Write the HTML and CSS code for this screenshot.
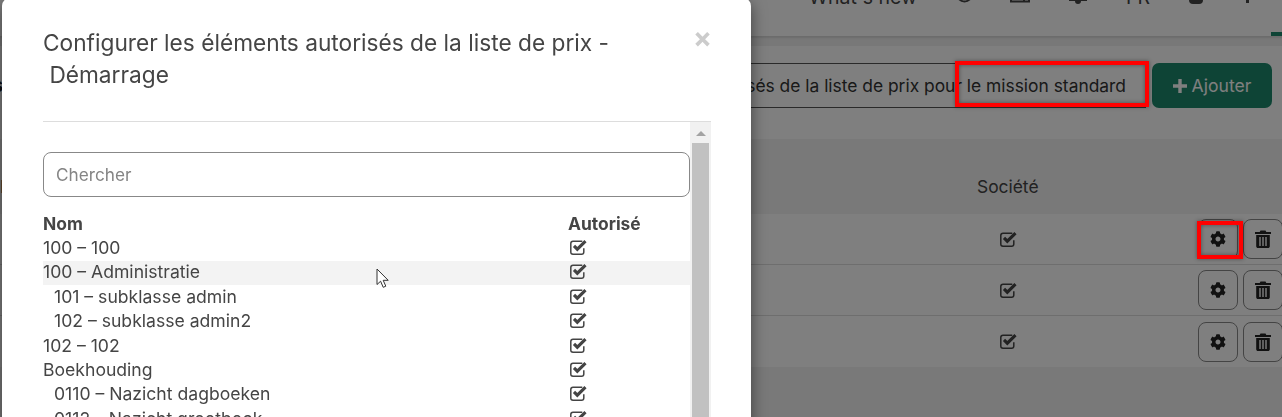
FILE: index.html
```html
<!DOCTYPE html>
<html lang="fr">
<head>
<meta charset="utf-8">
<title>Configurer les éléments autorisés</title>
<link rel="stylesheet" href="styles.css">
</head>
<body>
<svg class="defs" width="0" height="0" aria-hidden="true">
  <symbol id="i-gear" viewBox="0 0 512 512"><path d="M487.4 315.7l-42.6-24.6c4.3-23.2 4.3-47 0-70.2l42.6-24.6c4.9-2.8 7.1-8.6 5.5-14-11.1-35.6-30-67.8-54.7-94.6-3.8-4.1-10-5.1-14.8-2.3L380.8 110c-17.9-15.4-38.5-27.3-60.8-35.1V25.8c0-5.6-3.9-10.5-9.4-11.7-36.7-8.2-74.3-7.8-109.2 0-5.5 1.2-9.4 6.1-9.4 11.7V75c-22.2 7.9-42.8 19.8-60.8 35.1L88.7 85.5c-4.9-2.8-11-1.9-14.8 2.3-24.7 26.7-43.6 58.9-54.7 94.6-1.7 5.4.6 11.2 5.5 14L67.3 221c-4.3 23.2-4.3 47 0 70.2l-42.6 24.6c-4.9 2.8-7.1 8.6-5.5 14 11.1 35.6 30 67.8 54.7 94.6 3.8 4.1 10 5.1 14.8 2.3l42.6-24.6c17.9 15.4 38.5 27.3 60.8 35.1v49.2c0 5.6 3.9 10.5 9.4 11.7 36.7 8.2 74.3 7.8 109.2 0 5.5-1.2 9.4-6.1 9.4-11.7v-49.2c22.2-7.9 42.8-19.8 60.8-35.1l42.6 24.6c4.9 2.8 11 1.9 14.8-2.3 24.7-26.7 43.6-58.9 54.7-94.6 1.5-5.5-.7-11.3-5.6-14.1zM256 336c-44.1 0-80-35.9-80-80s35.9-80 80-80 80 35.9 80 80-35.9 80-80 80z"/></symbol>
  <symbol id="i-trash" viewBox="0 0 16 18"><path fill-rule="evenodd" d="M5.5 0.5h5l.8 1.6H16v1.900H0V2.100h4.700zM1.200 5h13.600v11.200c0 1-.8 1.800-1.800 1.800H3c-1 0-1.800-.8-1.800-1.800zM4.300 7v9h1.400V7zM7.300 7v9h1.400V7zM10.300 7v9h1.400V7z"/></symbol>
  <symbol id="i-check" viewBox="0 0 17 15"><path fill="none" stroke="currentColor" stroke-width="1.500" d="M13.800 8.200v3.700c0 1.300-.9 2.300-2.200 2.300H3c-1.300 0-2.200-1-2.200-2.300V3.500c0-1.300.9-2.300 2.200-2.300h9.300"/><path fill="none" stroke="currentColor" stroke-width="3.100" d="M4 5.900l3.300 3.300 8.200-8"/></symbol>
</svg>

<div class="page">
  <header class="topbar">
    <span class="top-link">What's new</span>
    <svg class="top-ic" width="17" height="18" viewBox="0 0 17 18"><circle cx="8.500" cy="9" r="7.500" fill="none" stroke="currentColor" stroke-width="2"/></svg>
    <svg class="top-ic top-tight" width="20" height="18" viewBox="0 0 20 18"><path fill="none" stroke="currentColor" stroke-width="2" d="M1 1v15.500h18V1M14 16V8"/></svg>
    <svg class="top-ic top-bell" width="18" height="18" viewBox="0 0 18 18"><path d="M3 0h12l3 13v1H0v-1zM6 14h6a3 3 0 0 1-6 0z"/></svg>
    <span class="top-link">FR</span>
    <svg class="top-ic top-user" width="14" height="18" viewBox="0 0 14 18"><path d="M0 0h14v14a4 4 0 0 1-4 4H4a4 4 0 0 1-4-4z"/></svg>
    <svg class="top-ic top-last" width="5" height="18" viewBox="0 0 5 18"><rect x="1" y="0" width="3" height="18"/></svg>
    <span class="top-tab"></span>
  </header>
  <div class="strip"></div>
  <section class="toolbar">
    <h1 class="page-title">s</h1>
    <div class="notice">Configurer les éléments autorisés de la liste de prix pour le mission standard</div>
    <button class="add-btn" type="button"><svg width="14" height="14" viewBox="0 0 14 14"><path d="M5.300 0h3.400v5.300H14v3.400H8.700V14H5.300V8.700H0V5.300h5.300z"/></svg>Ajouter</button>
  </section>
  <section class="panel">
    <div class="row head">
      <span class="col-ind">Individuelle</span>
      <span class="col-soc">Société</span>
    </div>
    <div class="row item">
      <span class="col-ind"></span>
      <span class="col-soc"><svg class="check"><use href="#i-check"/></svg></span>
      <span class="actions">
        <button class="ic-btn" type="button"><svg class="gear"><use href="#i-gear"/></svg></button>
        <button class="ic-btn" type="button"><svg class="trash"><use href="#i-trash"/></svg></button>
      </span>
    </div>
    <div class="row item">
      <span class="col-ind"></span>
      <span class="col-soc"><svg class="check"><use href="#i-check"/></svg></span>
      <span class="actions">
        <button class="ic-btn" type="button"><svg class="gear"><use href="#i-gear"/></svg></button>
        <button class="ic-btn" type="button"><svg class="trash"><use href="#i-trash"/></svg></button>
      </span>
    </div>
    <div class="row item last">
      <span class="col-ind"></span>
      <span class="col-soc"><svg class="check"><use href="#i-check"/></svg></span>
      <span class="actions">
        <button class="ic-btn" type="button"><svg class="gear"><use href="#i-gear"/></svg></button>
        <button class="ic-btn" type="button"><svg class="trash"><use href="#i-trash"/></svg></button>
      </span>
    </div>
  </section>
</div>

<div class="backdrop"></div>
<div class="mark mark-text"></div>
<div class="mark mark-gear"></div>

<div class="modal" role="dialog">
  <div class="modal-head">
    <h2 class="modal-title">Configurer les éléments autorisés de la liste de prix -<br>&nbsp;Démarrage</h2>
    <span class="close">×</span>
  </div>
  <div class="modal-scroll">
    <div class="modal-body">
      <input class="search" type="text" placeholder="Chercher">
      <div class="list">
        <div class="l-row l-head"><span class="l-name">Nom</span><span class="l-auth">Autorisé</span></div>
        <div class="l-row"><span class="l-name">100 – 100</span><span class="l-auth"><svg class="check"><use href="#i-check"/></svg></span></div>
        <div class="l-row hover"><span class="l-name">100 – Administratie</span><span class="l-auth"><svg class="check"><use href="#i-check"/></svg></span></div>
        <div class="l-row sub"><span class="l-name">101 – subklasse admin</span><span class="l-auth"><svg class="check"><use href="#i-check"/></svg></span></div>
        <div class="l-row sub"><span class="l-name">102 – subklasse admin2</span><span class="l-auth"><svg class="check"><use href="#i-check"/></svg></span></div>
        <div class="l-row"><span class="l-name">102 – 102</span><span class="l-auth"><svg class="check"><use href="#i-check"/></svg></span></div>
        <div class="l-row"><span class="l-name">Boekhouding</span><span class="l-auth"><svg class="check"><use href="#i-check"/></svg></span></div>
        <div class="l-row sub"><span class="l-name">0110 – Nazicht dagboeken</span><span class="l-auth"><svg class="check"><use href="#i-check"/></svg></span></div>
        <div class="l-row sub"><span class="l-name">0112 – Nazicht grootboek</span><span class="l-auth"><svg class="check"><use href="#i-check"/></svg></span></div>
      </div>
    </div>
    <div class="scrollbar">
      <span class="sb-arrow"></span>
      <span class="sb-thumb"></span>
    </div>
  </div>
</div>

<svg class="cursor" width="15" height="21" viewBox="0 0 15 21"><path d="M1 1v15.500l3.600-3.300 2.600 6.100 2.600-1.100-2.600-5.900h5z" fill="#fff" stroke="#333" stroke-width="1"/></svg>
</body>
</html>
```

FILE: styles.css
```css
* { box-sizing: border-box; }
html, body { margin: 0; height: 100%; overflow: hidden; }
body {
  font-family: Inter, "Liberation Sans", sans-serif;
  font-size: 17.4px;
  color: #454545;
  background: #fff;
}
.defs { position: absolute; }
.page { width: 1283px; height: 417px; overflow: hidden; }

.topbar {
  height: 36px;
  display: flex;
  align-items: flex-start;
  justify-content: flex-end;
  gap: 39px;
  padding-right: 33px;
  overflow: hidden;
  position: relative;
  background: #fff;
}
.top-link { margin-top: -15px; line-height: 24px; font-size: 19.500px; color: #444; }
.top-ic { margin-top: -15px; color: #444; fill: #444; }
.top-tight { margin-left: -2px; }
.top-bell { margin-top: -13px; }
.top-user { margin-top: -14px; }
.top-last { margin-left: 3px; }
.top-tab { position: absolute; right: 0; bottom: 0; width: 12px; height: 4px; background: #1c886c; }

.strip {
  height: 10px;
  background: #f0f0f0;
  box-shadow: inset 0 2px 2px rgba(0, 0, 0, .1);
}

.toolbar {
  display: flex;
  justify-content: flex-end;
  gap: 6px;
  padding: 17px 11px 31px 0;
  background: #fff;
}
.page-title {
  margin: 0 auto 0 -8px;
  font-size: 20px;
  line-height: 45px;
  font-weight: 700;
  color: #222;
}
.notice {
  height: 45px;
  width: 900px;
  flex: none;
  border-top: 1px solid #555;
  border-bottom: 1px solid #555;
  padding-right: 20px;
  text-align: right;
  line-height: 43px;
  color: #333;
  white-space: nowrap;
}
.add-btn {
  width: 120px;
  height: 45px;
  border: 0;
  border-radius: 7px;
  background: #1c886c;
  color: #fff;
  font: 17.6px Inter, "Liberation Sans", sans-serif;
  display: flex;
  align-items: center;
  justify-content: center;
  gap: 5px;
}
.add-btn svg { fill: #fff; }

.panel { background: #f2f2f2; height: 279px; }
.row { display: flex; align-items: center; }
.head { height: 75px; padding-top: 19px; color: #444; }
.item { height: 51px; background: #fff; border-bottom: 1px solid #ddd; }
.item.last { border-bottom: 0; }
.col-ind { width: 735px; flex: none; }
.col-soc { width: 242px; flex: none; margin-left: 242px; }
.item .col-soc { padding-left: 23px; display: flex; }
.actions { display: flex; gap: 5px; margin-left: -21px; }
.ic-btn {
  width: 40px;
  height: 40px;
  padding: 0;
  border: 1px solid #888;
  border-radius: 8px;
  background: #fff;
  display: flex;
  align-items: center;
  justify-content: center;
}
.gear { width: 16px; height: 16px; fill: #222; }
.trash { width: 16px; height: 18px; fill: #222; }
.check { width: 17px; height: 15px; color: #444; display: block; }

.backdrop { position: fixed; inset: 0; background: rgba(0, 0, 0, .5); }
.mark { position: absolute; border: 4px solid #f00; box-shadow: 0 0 4px rgba(0, 0, 0, .4), inset 0 0 4px rgba(0, 0, 0, .4); }
.mark-text { left: 955px; top: 61px; width: 194px; height: 46px; }
.mark-gear { left: 1197px; top: 221px; width: 46px; height: 38px; }

.modal {
  position: absolute;
  left: 2px;
  top: -2px;
  width: 749px;
  height: 560px;
  background: #fff;
  border-radius: 8px;
  box-shadow: 0 5px 15px rgba(0, 0, 0, .5);
  padding: 0 40px 0 41px;
  color: #454545;
}
.modal-head {
  display: flex;
  justify-content: space-between;
  align-items: flex-start;
  padding: 29px 0 30px;
  border-bottom: 1px solid #ddd;
}
.modal-title { margin: 0; font-size: 22.7px; font-weight: 400; line-height: 32px; }
.close { color: #ccc; font-size: 28px; font-weight: 700; line-height: 22px; margin-right: -1px; }
.modal-scroll { display: flex; }
.modal-body { width: 647px; padding-top: 30px; }
.search {
  display: block;
  width: 100%;
  height: 45px;
  padding: 0 12px;
  border: 1px solid #888;
  border-radius: 8px;
  font: 17.2px Inter, "Liberation Sans", sans-serif;
  outline: 0;
}
.search::placeholder { color: #858585; opacity: 1; }
.list { margin-top: 15px; }
.l-row { display: flex; align-items: center; height: 24.4px; font-size: 17.6px; }
.l-head { font-size: 17.4px; font-weight: 700; }
.l-name { flex: 1; white-space: nowrap; margin-top: -2px; }
.l-auth { width: 122px; flex: none; margin-top: -2px; }
.l-auth .check { margin-left: 2px; }
.hover { background: #f3f3f3; }
.sub .l-name { padding-left: 11px; }
.scrollbar {
  width: 21px;
  height: 440px;
  background: #f1f1f1;
  padding: 0 2px;
  display: flex;
  flex-direction: column;
  align-items: center;
}
.sb-arrow {
  margin: 9px 0 7px;
  width: 0;
  height: 0;
  border: 5px solid transparent;
  border-top: 0;
  border-bottom-color: #a3a3a3;
}
.sb-thumb { width: 17px; flex: 1; background: #c1c1c1; }

.cursor { position: absolute; left: 376px; top: 268px; }
```
